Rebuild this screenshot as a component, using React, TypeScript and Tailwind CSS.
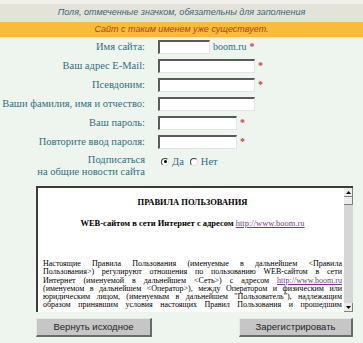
import React from "react";

const serif = { fontFamily: '"Liberation Serif", "Times New Roman", serif' };
const sans = { fontFamily: '"Liberation Sans", Arial, sans-serif' };

function Input({ w }: { w: string }) {
  return (
    <div
      className={`${w} h-[14px] bg-white border-t-2 border-l-2 border-t-[#5a5a5a] border-l-[#5a5a5a] border-b border-r border-b-[#e4e4e4] border-r-[#e4e4e4]`}
    />
  );
}

function Star() {
  return <span className="text-[#c04848] text-[10px] leading-none ml-[3px] font-bold">*</span>;
}

function Row({ label, children }: { label: string; children: React.ReactNode }) {
  return (
    <>
      <div className="h-[19px] flex items-center justify-end whitespace-nowrap text-[10.5px] text-[#2f6f80]" style={serif}>
        {label}
      </div>
      <div className="h-[19px] flex items-center">{children}</div>
    </>
  );
}

function Radio({ checked }: { checked?: boolean }) {
  return (
    <span className="relative inline-block w-[8px] h-[8px] rounded-full bg-white border border-t-[#404040] border-l-[#404040] border-r-[#e0e0e0] border-b-[#e0e0e0]">
      {checked && <span className="absolute left-[1.5px] top-[1.5px] w-[3px] h-[3px] rounded-full bg-black" />}
    </span>
  );
}

const lines = [
  "Настоящие Правила Пользования (именуемые в дальнейшем <Правила",
  "Пользования>) регулируют отношения по пользованию WEB-сайтом в сети",
  null,
  "(именуемом в дальнейшем <Оператор>), между Оператором и физическим или",
  "юридическим лицом, (именуемым в дальнейшем \"Пользователь\"), надлежащим",
  "образом принявшим условия настоящих Правил Пользования и прошедшим",
];

export default function App() {
  return (
    <div className="w-[363px] h-[343px] bg-[#eef5ee] overflow-hidden" style={serif}>
      <div className="h-[4px] bg-[#f0f0ea]" />
      <div
        className="h-[18px] bg-[#e3e3d9] flex items-center justify-center italic text-[9px] text-[#36687c]"
        style={sans}
      >
        Поля, отмеченные значком, обязательны для заполнения
      </div>
      <div
        className="h-[15px] bg-[#f9bb3a] flex items-center justify-center italic text-[9px] text-[#b8401c]"
        style={sans}
      >
        Сайт с таким именем уже существует.
      </div>

      <div className="grid grid-cols-[145px_1fr] gap-x-[13px]">
        <Row label="Имя сайта:">
          <Input w="w-[52px]" />
          <span className="ml-[3px] text-[10px] text-[#2f6f80]" style={serif}>boom.ru</span>
          <Star />
        </Row>
        <Row label="Ваш адрес E-Mail:">
          <Input w="w-[97px]" />
          <Star />
        </Row>
        <Row label="Псевдоним:">
          <Input w="w-[97px]" />
          <Star />
        </Row>
        <Row label="Ваши фамилия, имя и отчество:">
          <Input w="w-[97px]" />
        </Row>
        <Row label="Ваш пароль:">
          <Input w="w-[79px]" />
          <Star />
        </Row>
        <Row label="Повторите ввод пароля:">
          <Input w="w-[79px]" />
          <Star />
        </Row>
        <div className="pt-[3px] text-right whitespace-nowrap text-[10.5px] leading-[12px] text-[#2f6f80]" style={serif}>
          Подписаться
          <br />
          на общие новости сайта
        </div>
        <div className="pt-[3px] h-[12px] flex items-center gap-[3px] text-[10.5px] leading-[12px] text-[#2f6f80] pl-[3px]" style={serif}>
          <span className="flex items-center gap-[3px] pt-[6px]">
            <Radio checked />
            <span>Да</span>
          </span>
          <span className="flex items-center gap-[3px] pt-[6px] ml-[3px]">
            <Radio />
            <span>Нет</span>
          </span>
        </div>
      </div>

      <div className="ml-[36px] mt-[8px] w-[317px] h-[126px] flex border-t-2 border-l-2 border-[#3c3c3c] bg-white" style={serif}>
        <div className="flex-1 overflow-hidden pl-[5px] pr-[2px] text-black">
          <div className="pt-[9px] text-center font-bold text-[8.5px] leading-[10px]">ПРАВИЛА ПОЛЬЗОВАНИЯ</div>
          <div className="mt-[11px] text-center font-bold text-[8.5px] leading-[10px]">
            WEB-сайтом в сети Интернет с адресом{" "}
            <span className="font-normal text-[#7a3a8a] underline">http://www.boom.ru</span>
          </div>
          <div className="mt-[32px] text-[8px] leading-[8.3px]">
            {lines.map((l, i) =>
              l === null ? (
                <div key={i} className="whitespace-nowrap flex justify-between">
                  <span>Интернет</span>
                  <span>(именуемой</span>
                  <span>в</span>
                  <span>дальнейшем</span>
                  <span>&lt;Сеть&gt;)</span>
                  <span>с</span>
                  <span>адресом</span>
                  <span className="text-[#7a3a8a] underline">http://www.boom.ru</span>
                </div>
              ) : (
                <div key={i} className="whitespace-nowrap flex justify-between">
                  {l.split(" ").map((w, j) => (
                    <span key={j}>{w}</span>
                  ))}
                </div>
              )
            )}
          </div>
        </div>
        <div className="w-[9px] bg-[#d6d6d6] flex flex-col justify-between">
          <div>
            <div className="h-[9px] bg-[#ececec] border-r border-b border-[#808080] flex items-center justify-center">
              <svg width="5" height="3" viewBox="0 0 5 3"><path d="M2.5 0 L5 3 L0 3 Z" fill="#000" /></svg>
            </div>
            <div className="h-[8px] bg-[#ececec] border-r border-b border-[#808080]" />
          </div>
          <div className="h-[9px] bg-[#ececec] border-r border-b border-[#808080] flex items-center justify-center">
            <svg width="5" height="3" viewBox="0 0 5 3"><path d="M0 0 L5 0 L2.5 3 Z" fill="#000" /></svg>
          </div>
        </div>
      </div>

      <div className="mt-[6px] ml-[36px] w-[317px] flex justify-between" style={sans}>
        <div className="w-[116px] h-[19px] bg-[#c6c6c6] border-t border-l border-[#e8e8e8] border-r-2 border-b-2 border-r-[#6a6a6a] border-b-[#6a6a6a] flex items-center justify-center text-[9.5px] text-[#222]">
          Вернуть исходное
        </div>
        <div className="w-[114px] h-[19px] bg-[#c6c6c6] border-t border-l border-[#e8e8e8] border-r-2 border-b-2 border-r-[#6a6a6a] border-b-[#6a6a6a] flex items-center justify-center text-[9.5px] text-[#222]">
          Зарегистрировать
        </div>
      </div>
    </div>
  );
}
